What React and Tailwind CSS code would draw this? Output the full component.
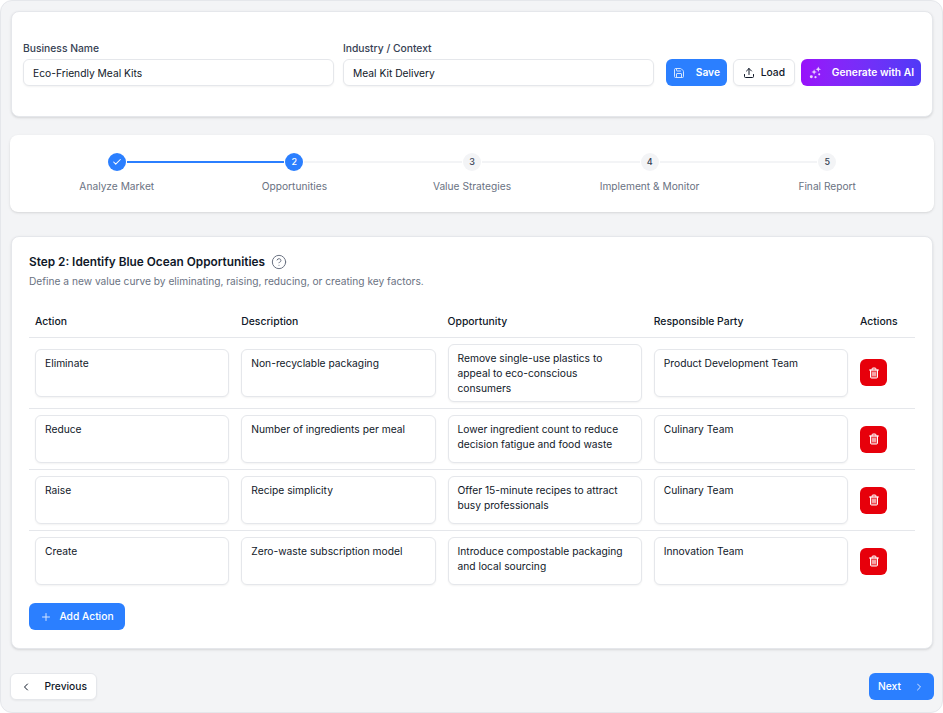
import React from 'react';
import { Check, ChevronLeft, ChevronRight, CircleHelp, Plus, Save, Trash2, Upload } from 'lucide-react';

const steps = ['Analyze Market', 'Opportunities', 'Value Strategies', 'Implement & Monitor', 'Final Report'];

const rows = [
  { action: 'Eliminate', description: 'Non-recyclable packaging', opportunity: 'Remove single-use plastics to appeal to eco-conscious consumers', party: 'Product Development Team', tall: true },
  { action: 'Reduce', description: 'Number of ingredients per meal', opportunity: 'Lower ingredient count to reduce decision fatigue and food waste', party: 'Culinary Team' },
  { action: 'Raise', description: 'Recipe simplicity', opportunity: 'Offer 15-minute recipes to attract busy professionals', party: 'Culinary Team' },
  { action: 'Create', description: 'Zero-waste subscription model', opportunity: 'Introduce compostable packaging and local sourcing', party: 'Innovation Team' },
];

const Sparkles = () => (
  <svg viewBox="0 0 14 14" className="w-[13px] h-[13px] text-white/80" fill="currentColor">
    <path d="M10 .5l.9 2.1 2.100.9-2.100.9-.9 2.100-.9-2.100L7 3.500l2.100-.9z" />
    <path d="M5.500 3.500l.8 2.200 2.200.8-2.200.8-.8 2.200-.8-2.200-2.200-.8 2.200-.8z" />
    <circle cx="2.500" cy="11.500" r="1.600" />
    <circle cx="7" cy="12" r="1.200" />
    <circle cx="11" cy="9" r="1.100" />
  </svg>
);

const Field = ({ label, value }) => (
  <div className="flex-1">
    <label className="block text-[10.3px] leading-[15px] font-medium text-gray-700 mb-[3px]">{label}</label>
    <input
      readOnly
      value={value}
      className="w-full h-[27px] px-[9px] text-[10.25px] text-gray-900 bg-white border border-gray-200 rounded-md shadow-xs outline-none"
    />
  </div>
);

const Cell = ({ value, className }) => (
  <textarea
    readOnly
    value={value}
    className={`block w-full px-[9px] py-[6px] text-[10.25px] leading-[15px] text-gray-900 bg-white border border-gray-200 rounded-md shadow-xs resize-none outline-none overflow-hidden ${className}`}
  />
);

const App = () => {
  return (
    <div className="w-[943px] h-[713px] overflow-hidden bg-gray-100 border border-gray-200 rounded-xl pt-[10px] pl-[9px] pr-[8px] font-['Inter',sans-serif]">
      <div className="mx-px bg-white rounded-lg border border-gray-200 shadow-sm h-[106px] px-[11px] pb-[30px] flex items-end gap-3 text-gray-900">
        <div className="flex-1 flex gap-[9px]">
          <Field label="Business Name" value="Eco-Friendly Meal Kits" />
          <Field label="Industry / Context" value="Meal Kit Delivery" />
        </div>
        <div className="flex gap-1.5 text-[10.25px] font-semibold">
          <button className="h-[27px] w-[61px] flex items-center justify-between pl-[7px] pr-[7px] rounded-md bg-blue-500 text-white">
            <Save className="w-3 h-3 opacity-80" />
            <span>Save</span>
          </button>
          <button className="h-[27px] w-[62px] flex items-center justify-between px-[9px] rounded-md bg-white border border-gray-200 shadow-xs text-gray-900 font-medium">
            <Upload className="w-3 h-3" />
            <span>Load</span>
          </button>
          <button className="h-[27px] w-[120px] flex items-center justify-between pl-2 pr-[7px] rounded-md bg-gradient-to-r from-purple-600 to-indigo-600 text-white">
            <Sparkles />
            <span>Generate with AI</span>
          </button>
        </div>
      </div>

      <div className="mt-[18px] bg-white rounded-lg shadow-sm h-[77px] px-[18px] pt-[18px] flex">
        {steps.map((step, i) => (
          <div key={step} className="flex-1 flex flex-col items-center">
            <div className="w-full flex items-center h-[18px]">
              <div className={`flex-1 h-0.5 mr-px ${i === 0 ? '' : i === 1 ? 'bg-blue-500' : 'bg-gray-100'}`} />
              <div className={`w-[18px] h-[18px] rounded-full flex items-center justify-center text-[9px] font-medium ${i < 2 ? 'bg-blue-500 text-white' : 'bg-gray-100 text-gray-700'}`}>
                {i === 0 ? <Check className="w-2.5 h-2.5" strokeWidth={2.5} /> : i + 1}
              </div>
              <div className={`flex-1 h-0.5 ml-px ${i === 4 ? '' : i === 0 ? 'bg-blue-500' : 'bg-gray-100'}`} />
            </div>
            <span className="mt-[8px] text-[10.2px] leading-[15px] text-gray-500">{step}</span>
          </div>
        ))}
      </div>

      <div className="mt-[24px] mx-px bg-white rounded-lg border border-gray-200 shadow-sm h-[413px] px-[17px] pt-[16px]">
        <div className="flex items-center gap-1.5">
          <h2 className="text-[11.8px] leading-[18px] font-semibold text-gray-900">Step 2: Identify Blue Ocean Opportunities</h2>
          <CircleHelp className="w-4 h-4 text-gray-500" strokeWidth={1.5} />
        </div>
        <p className="mt-[3px] text-[10.2px] leading-[15px] text-gray-500">Define a new value curve by eliminating, raising, reducing, or creating key factors.</p>

        <table className="mt-[16px] w-full table-fixed border-collapse text-[10.4px]">
          <thead>
            <tr className="border-b border-gray-200 text-left font-medium text-gray-900 h-[32px]">
              <th className="font-medium px-1.5 pt-0.5">Action</th>
              <th className="font-medium px-1.5 pt-0.5">Description</th>
              <th className="font-medium px-1.5 pt-0.5">Opportunity</th>
              <th className="font-medium px-1.5 pt-0.5">Responsible Party</th>
              <th className="font-medium px-1.5 pt-0.5 w-[61px]">Actions</th>
            </tr>
          </thead>
          <tbody>
            {rows.map((row, i) => (
              <tr key={row.action} className={i < rows.length - 1 ? 'border-b border-gray-200' : ''}>
                <td className="p-1.5 align-middle"><Cell value={row.action} className="h-12" /></td>
                <td className="p-1.5 align-middle"><Cell value={row.description} className="h-12" /></td>
                <td className="p-1.5 align-middle"><Cell value={row.opportunity} className={row.tall ? 'h-[58px]' : 'h-12'} /></td>
                <td className="p-1.5 align-middle"><Cell value={row.party} className="h-12" /></td>
                <td className="p-1.5 align-middle">
                  <button className={`w-[27px] h-[27px] rounded-md bg-red-600 flex items-center justify-center text-white ${row.tall ? '' : 'mt-px'}`}>
                    <Trash2 className="w-3 h-3 fill-white/30" />
                  </button>
                </td>
              </tr>
            ))}
          </tbody>
        </table>

        <button className="mt-[12px] h-[27px] w-[96px] flex items-center justify-center gap-[7px] pt-px rounded-md bg-blue-500 text-white text-[10.25px] font-medium">
          <Plus className="w-3 h-3 opacity-80" />
          <span>Add Action</span>
        </button>
      </div>

      <div className="mt-[24px] flex justify-between">
        <button className="h-[27px] w-[87px] flex items-center justify-between px-[9px] rounded-md bg-white border border-gray-200 shadow-xs text-[10.25px] font-medium text-gray-900">
          <ChevronLeft className="w-3 h-3" />
          <span>Previous</span>
        </button>
        <button className="h-[27px] w-[65px] flex items-center justify-between px-[9px] rounded-md bg-blue-500 text-white text-[10.25px] font-medium">
          <span>Next</span>
          <ChevronRight className="w-3 h-3 opacity-80" />
        </button>
      </div>
    </div>
  );
};

export default App;
